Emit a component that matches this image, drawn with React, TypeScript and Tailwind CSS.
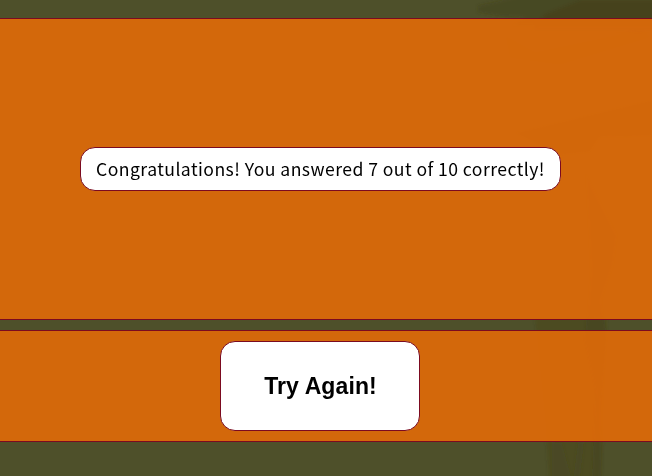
function Backdrop() {
  return (
    <svg className="pointer-events-none absolute inset-0 h-full w-full" viewBox="0 0 652 476" aria-hidden="true">
      <defs>
        <filter id="soften"><feGaussianBlur stdDeviation="1.5" /></filter>
      </defs>
      <g filter="url(#soften)" fill="#403c15">
        <path d="M478 6L520 -4H660V26H510L525 17L500 16L478 12Z" opacity=".4" />
        <path d="M545 14L580 0H660V32H530Z" opacity=".3" />
        <path d="M505 35L535 52L640 30L652 37L560 65L510 58Z" opacity=".2" />
        <path d="M515 133L652 100V136L600 137L590 152L560 155Z" opacity=".5" />
        <path d="M585 170L600 200L618 235L614 265L602 300L607 340L601 400L601 480H592L596 390L585 340L590 270Z" opacity=".3" />
        <path d="M535 317L607 318L601 480H549L545 420L538 350Z" opacity=".2" />
        <path d="M552 442L562 443L572 480H552ZM578 442H584L580 480H573Z" opacity=".2" />
      </g>
    </svg>
  );
}

export default function App() {
  return (
    <main className="relative h-[476px] w-full overflow-hidden bg-[#4e502a] pt-[18px] text-black">
      <Backdrop />
      <div className="relative flex flex-col gap-[10px]">
        <section className="flex h-[302px] items-center border-y border-[#7b0a20] bg-[#da6909]/95 bg-clip-padding pl-20">
          <p className="flex h-11 w-[481px] items-center justify-center rounded-[15px] border border-[#7b0a20] bg-white pt-px font-['Noto_Sans_CJK_SC',sans-serif] text-[17.6px] tracking-[0.44px] whitespace-nowrap">
            Congratulations! You answered 7 out of 10 correctly!
          </p>
        </section>
        <section className="flex h-28 items-center border-y border-[#7b0a20] bg-[#da6909]/95 bg-clip-padding pl-[220px]">
          <button className="h-[90px] w-[200px] rounded-[15px] border border-[#7b0a20] bg-white pl-px font-['Liberation_Sans',Arial,sans-serif] text-[23px] font-bold tracking-[0.1px]">
            Try Again!
          </button>
        </section>
      </div>
    </main>
  );
}
